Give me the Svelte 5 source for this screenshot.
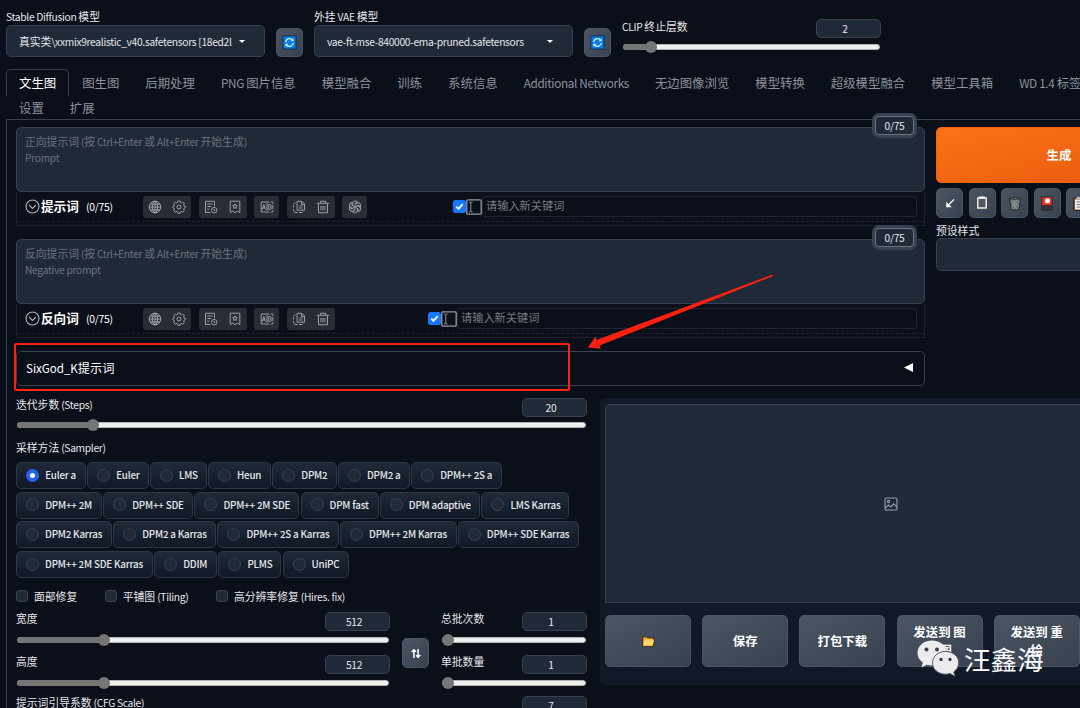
<script lang="ts">
    type Sampler = { name: string; width: number }

    const tabs: string[] = ['文生图', '图生图', '后期处理', 'PNG 图片信息', '模型融合', '训练', '系统信息', 'Additional Networks', '无边图像浏览', '模型转换', '超级模型融合', '模型工具箱', 'WD 1.4 标签器']
    const moreTabs: string[] = ['设置', '扩展']

    const samplerRows: Sampler[][] = [
        [
            { name: 'Euler a', width: 70 },
            { name: 'Euler', width: 61.5 },
            { name: 'LMS', width: 57 },
            { name: 'Heun', width: 63 },
            { name: 'DPM2', width: 64.5 },
            { name: 'DPM2 a', width: 72 },
            { name: 'DPM++ 2S a', width: 91 }
        ],
        [
            { name: 'DPM++ 2M', width: 86 },
            { name: 'DPM++ SDE', width: 90 },
            { name: 'DPM++ 2M SDE', width: 105 },
            { name: 'DPM fast', width: 78 },
            { name: 'DPM adaptive', width: 100.5 },
            { name: 'LMS Karras', width: 88 }
        ],
        [
            { name: 'DPM2 Karras', width: 96 },
            { name: 'DPM2 a Karras', width: 103 },
            { name: 'DPM++ 2S a Karras', width: 121.5 },
            { name: 'DPM++ 2M Karras', width: 116.5 },
            { name: 'DPM++ SDE Karras', width: 121 }
        ],
        [
            { name: 'DPM++ 2M SDE Karras', width: 137 },
            { name: 'DDIM', width: 63 },
            { name: 'PLMS', width: 63 },
            { name: 'UniPC', width: 66 }
        ]
    ]

    const prompts = [
        { hint: '正向提示词', sub: 'Prompt', title: '提示词', groups: [['globe', 'gear'], ['history', 'bookmark'], ['translate'], ['copy', 'trash'], ['gpt']] },
        { hint: '反向提示词', sub: 'Negative prompt', title: '反向词', groups: [['globe', 'gear'], ['history', 'bookmark'], ['translate'], ['copy', 'trash']] }
    ]

    let sampler = $state('Euler a')

    // latin runs are set a bit tighter than the chinese ones
    function runs(text: string): string[] {
        return text.split(/([\x20-\x7e]+)/)
    }
</script>

{#snippet mixed(text: string)}{#each runs(text) as run, i}{#if i % 2}<span class="latin">{run}</span>{:else}{run}{/if}{/each}{/snippet}

{#snippet slider(label: string, value: string, fill: number)}
    <div class="slider">
        <div class="slider-head">
            <span>{@render mixed(label)}</span>
            <div class="number">{@render mixed(value)}</div>
        </div>
        <div class="track">
            <div class="fill" style="width: {fill}px"></div>
            <div class="thumb"></div>
        </div>
    </div>
{/snippet}

{#snippet refresh()}
    <button class="tool refresh" aria-label="refresh">
        <svg width="15" height="15" viewBox="0 0 15 15">
            <rect x=".5" y=".5" width="14" height="14" rx="1" fill="#0a2a4c" />
            <rect x="1.4" y="1.4" width="12.2" height="12.2" fill="#0a7de0" />
            <path d="M3.7 7A3.9 3.9 0 0 1 10.7 5.2M11.3 8A3.9 3.9 0 0 1 4.3 9.8" fill="none" stroke="#d9f1ff" stroke-width="1.3" />
            <path d="M11.6 3.3v3H8.7zM3.4 11.7v-3h2.9z" fill="#d9f1ff" />
        </svg>
    </button>
{/snippet}

{#snippet icon(name: string)}
    <svg class="icon" width="14" height="14" viewBox="0 0 14 14">
        {#if name === 'globe'}
            <circle cx="7" cy="7" r="5.8" />
            <ellipse cx="7" cy="7" rx="2.7" ry="5.8" />
            <path d="M7 1.2v11.6M1.2 7h11.6M2 4.2h10M2 9.8h10" />
        {:else if name === 'gear'}
            <circle cx="7" cy="7" r="2" />
            <path d="M5.9 1h2.2l.4 1.4 1 .4 1.3-.7 1.5 1.5-.7 1.3.4 1 1.2.4v1.6l-1.2.5-.4 1 .7 1.2-1.5 1.6-1.3-.7-1 .4-.4 1.3H5.9l-.4-1.3-1-.4-1.3.7-1.5-1.6.7-1.2-.4-1L.9 7.9V6.3L2 5.9l.4-1-.7-1.3 1.5-1.5 1.3.7 1-.4z" />
        {:else if name === 'history'}
            <path d="M6.5 12.5H1.5V1.3h9v5M3.3 4h5.3M3.3 6.5h3.8M3.3 9h2" />
            <circle cx="10.2" cy="10.2" r="2.8" />
            <path d="M10 8.8v1.7h1.3" />
        {:else if name === 'bookmark'}
            <path d="M2.2 1.2h9.6v11.5L9.4 11 7 12.6 4.6 11l-2.4 1.7z" />
            <path d="M7 3.8l.7 1.5 1.7.2-1.2 1.2.3 1.7L7 7.6l-1.5.8.3-1.7-1.2-1.2 1.7-.2z" />
        {:else if name === 'translate'}
            <path d="M6 2H1.2v10H6M8 2h1.5M10.8 2h2v1.8M12.8 5v4M12.8 10.2V12h-2M9.5 12H8M7 .8v12.4" />
            <path d="M2.3 9.5L3.9 4.5l1.6 5M2.8 7.9h2.2M8.6 4.6v4.8h1.5q1.3 0 1.3-1.3 0-1.1-1.2-1.2 1-.1 1-1.1 0-1.2-1.2-1.2z" />
        {:else if name === 'copy'}
            <path d="M5 1.3h4.8L12.5 4v6.2H5zM9.5 1.3v3h3M6.8 6h3.9M6.8 8h3.9" />
            <path d="M3.5 3L1.6 4.2M1.5 5.5v2M1.5 9v1.5l1.5 2h2.5M7 12.5h3l1-1" />
        {:else if name === 'trash'}
            <path d="M.9 3.3h12.2M4.5 3V1.3h5V3M2.5 3.5v9.2h9V3.500M5 5.7v4.8M7 5.7v4.8M9 5.7v4.8" />
        {:else if name === 'gpt'}
            {#each [0, 60, 120, 180, 240, 300] as angle}
                <path transform="rotate({angle} 7 7)" d="M4.6 5.6V3.5Q4.7 1 7.2 1q1.4 0 2.3 1.1L7 3.6v3" />
            {/each}
        {/if}
    </svg>
{/snippet}

<div class="page">
    <header>
        <div class="model">
            <label for="sd">{@render mixed('Stable Diffusion 模型')}</label>
            <div class="select" id="sd">
                <span class="value">{@render mixed('真实类\\xxmix9realistic_v40.safetensors [18ed2l')}</span>
                <i class="caret"></i>
            </div>
        </div>
        {@render refresh()}
        <div class="model">
            <label for="vae">{@render mixed('外挂 VAE 模型')}</label>
            <div class="select" id="vae">
                <span class="value">{@render mixed('vae-ft-mse-840000-ema-pruned.safetensors')}</span>
                <i class="caret"></i>
            </div>
        </div>
        {@render refresh()}
        <div class="clip">
            {@render slider('CLIP 终止层数', '2', 28)}
        </div>
    </header>

    <nav>
        {#each tabs as tab, i}
            <button class="tab" class:active={i === 0}>{@render mixed(tab)}</button>
        {/each}
    </nav>
    <nav class="second">
        {#each moreTabs as tab}
            <button class="tab">{tab}</button>
        {/each}
    </nav>

    <main>
        <div class="top">
            <div class="prompts">
                {#each prompts as prompt, i}
                    <section class="prompt">
                        <div class="textarea">
                            <p>{@render mixed(prompt.hint + ' (按 Ctrl+Enter 或 Alt+Enter 开始生成)')}</p>
                            <p>{@render mixed(prompt.sub)}</p>
                            <div class="counter">{@render mixed('0/75')}</div>
                        </div>
                        <div class="keywords">
                            <div class="bar">
                                <svg class="chevron" width="15" height="15" viewBox="0 0 15 15">
                                    <circle cx="7.5" cy="7.5" r="6.5" />
                                    <path d="M4 6l3.5 3.5L11 6" />
                                </svg>
                                <b>{prompt.title}</b>
                                <span class="count">{@render mixed('(0/75)')}</span>
                                <div class="groups">
                                    {#each prompt.groups as group}
                                        <div class="group" class:single={group.length === 1}>
                                            {#each group as name}
                                                {@render icon(name)}
                                            {/each}
                                        </div>
                                    {/each}
                                </div>
                                <div class="append" class:wide={i === 1}>
                                    <svg width="13" height="13" viewBox="0 0 13 13">
                                        <rect width="13" height="13" rx="2.5" fill="#1677ff" />
                                        <path d="M3.3 6.7l2.2 2.2 4.2-4.7" fill="none" stroke="#fff" stroke-width="1.8" />
                                    </svg>
                                    <svg width="16" height="16" viewBox="0 0 16 16" fill="none" stroke="#96989c">
                                        <rect x=".8" y=".8" width="14.4" height="14.4" rx="1" stroke-width="1.3" />
                                        <path d="M3 3h1l.8.7L5.6 3h1M3 13h1l.8-.7.8.7h1M4.8 3.5v9" />
                                    </svg>
                                    <div class="keyword">请输入新关键词</div>
                                </div>
                            </div>
                        </div>
                    </section>
                {/each}
                <div class="accordion">
                    <span>{@render mixed('SixGod_K提示词')}</span>
                    <svg width="9" height="9" viewBox="0 0 9 9"><path d="M0 4.5L9 0v9z" fill="#fff" /></svg>
                    <div class="highlight"></div>
                    <svg class="arrow" width="188" height="76" viewBox="0 0 188 76">
                        <path d="M0 73.5L7.5 62.5l1 3.5L184.500.5l.5 1.500L11.500 71.500l1 3.300z" fill="#ff200f" />
                    </svg>
                </div>
            </div>

            <aside>
                <button class="generate">生成</button>
                <div class="tools">
                    <button class="tool" aria-label="read parameters">
                        <svg width="10" height="10" viewBox="0 0 12 12"><path d="M10.8 1.7L3.5 9" fill="none" stroke="#fff" stroke-width="1.5" /><path d="M1.5 4.500v6.500h6.500z" fill="#fff" /></svg>
                    </button>
                    <button class="tool" aria-label="clear">
                        <svg width="12" height="14" viewBox="0 0 12 14"><path d="M1.8 2h8.4v10H1.8z" fill="#505864" stroke="#f4e8dc" stroke-width="1.5" /><path d="M3 1.5h6" stroke="#fff" stroke-width="2" /></svg>
                    </button>
                    <button class="tool" aria-label="delete">
                        <svg width="14" height="15" viewBox="0 0 14 15"><path d="M1.5 2.5h11L11 14H3z" fill="#66716f" stroke="#22282b" /><path d="M1 2.5Q7 0 13 2.5 7 4 1 2.5z" fill="#8e9998" stroke="#22282b" /><path d="M3 5l6 8M5 4l5.5 7M9 4l-5 7M11 5l-6 8" stroke="#a4afad" stroke-width=".6" /></svg>
                    </button>
                    <button class="tool" aria-label="extra networks">
                        <svg width="12" height="15" viewBox="0 0 12 15"><rect x=".5" y=".5" width="11" height="14" rx="1" fill="#252023" /><path d="M1.3 1.3h9.4v8H1.3z" fill="#f4371d" /><circle cx="6.5" cy="4.8" r="2.5" fill="#fff" /><path d="M1.3 10Q6 7 10.7 10v3.5H1.3z" fill="#38343a" /></svg>
                    </button>
                    <button class="tool" aria-label="apply style">
                        <svg width="13" height="15" viewBox="0 0 13 15"><rect x=".7" y="1.5" width="11.5" height="13" rx="1" fill="#8b5a36" stroke="#2a2422" /><path d="M2 3.5h9v10H2z" fill="#eee" /><path d="M3.5 1h6v2.5h-6z" fill="#b4bbc2" /><path d="M3.5 6h6M3.5 8.5h6M3.5 11h6" stroke="#777" /></svg>
                    </button>
                </div>
                <span class="style-label">预设样式</span>
                <div class="styles"></div>
            </aside>
        </div>

        <div class="bottom">
            <div class="settings">
                <div class="steps">
                    {@render slider('迭代步数 (Steps)', '20', 76)}
                </div>
                <span class="sampler-label">{@render mixed('采样方法 (Sampler)')}</span>
                <div class="samplers">
                    {#each samplerRows as row}
                        <div class="row">
                            {#each row as item}
                                <button class="radio" style="width: {item.width}px" onclick={() => (sampler = item.name)}>
                                    <i class:checked={sampler === item.name}></i>
                                    <span>{item.name}</span>
                                </button>
                            {/each}
                        </div>
                    {/each}
                </div>
                <div class="checks">
                    <div class="check"><i></i><span>面部修复</span></div>
                    <div class="check"><i></i><span>{@render mixed('平铺图 (Tiling)')}</span></div>
                    <div class="check"><i></i><span>{@render mixed('高分辨率修复 (Hires. fix)')}</span></div>
                </div>
                <div class="sizes">
                    <div class="dims">
                        {@render slider('宽度', '512', 87)}
                        {@render slider('高度', '512', 87)}
                    </div>
                    <button class="tool swap" aria-label="swap">
                        <svg width="10" height="11" viewBox="0 0 12 12" fill="none" stroke="#fff" stroke-width="1.8"><path d="M3.5 11.5v-10M.8 4.3l2.7-2.8L6 4M8.5.5v10M6 8l2.5 2.5 2.7-2.8" /></svg>
                    </button>
                    <div class="batch">
                        {@render slider('总批次数', '1', 5.5)}
                        {@render slider('单批数量', '1', 5.5)}
                    </div>
                </div>
                {@render slider('提示词引导系数 (CFG Scale)', '7', 120)}
            </div>

            <div class="results">
                <div class="gallery">
                    <svg width="14" height="14" viewBox="0 0 14 14" fill="none" stroke="#9aa1ad" stroke-width="1.1">
                        <rect x="1" y="1" width="12" height="12" rx="1.2" />
                        <circle cx="4.5" cy="4.5" r="1.1" />
                        <path d="M1.3 11l3.2-3 2.2 2 3-3.2 3.3 3.4" />
                    </svg>
                </div>
                <div class="actions">
                    <button aria-label="open folder">
                        <svg width="13" height="11" viewBox="0 0 13 11"><path d="M.7 10.3V.8h4l1 1h5.6v1.5h1.2l-1.3 7z" fill="#f3a52a" stroke="#3a2a16" /><path d="M2.5 3.6h9.4l-1.2 6.1H1.3z" fill="#ffd36b" /></svg>
                    </button>
                    <button>保存</button>
                    <button>打包下载</button>
                    <button>发送到 图生图</button>
                    <button>发送到 重绘</button>
                </div>
            </div>
        </div>
    </main>

    <div class="watermark">
        <svg width="43" height="37" viewBox="0 0 43 37">
            <path d="M15 .5C6.5.5.5 6 .5 13c0 4 2 7.2 5.3 9.5L4.5 27.5l5-2.8c2 .6 3.7.8 5.5.8 8 0 14.5-5.3 14.5-12.5S23 .5 15 .5z" fill="#ececee" />
            <path d="M28.5 11.5c-7.5 0-13 5-13 11.3s5.500 11.400 13 11.400c1.500 0 3-.2 4.500-.7l5 2.800-1.300-4.300c3-2.200 5-5.400 5-9.200 0-6.300-5.700-11.300-13.200-11.300z" fill="#ececee" stroke="#555b66" />
            <circle cx="9.5" cy="9.5" r="2" fill="#38404c" />
            <circle cx="20" cy="9.5" r="2" fill="#38404c" />
            <circle cx="24" cy="19.5" r="1.7" fill="#38404c" />
            <circle cx="33" cy="19.5" r="1.7" fill="#38404c" />
        </svg>
        <span>汪鑫海</span>
    </div>
</div>

<style>
    :global(body) {
        background: #0b0f19;
    }
    .page {
        position: relative;
        width: 1080px;
        height: 708px;
        overflow: hidden;
        background: #0b0f19;
        color: #e5e7eb;
        font: 10.8px/16px "Noto Sans CJK SC", sans-serif;
    }
    .page * {
        box-sizing: border-box;
    }
    .latin {
        font-size: .95em;
        letter-spacing: -.03em;
        line-height: 1;
        white-space: pre-wrap;
    }
    button {
        margin: 0;
        padding: 0;
        border: 0;
        background: none;
        color: inherit;
        font: inherit;
    }
    svg {
        display: block;
        flex: none;
    }
    p {
        margin: 0;
    }
    header {
        display: flex;
        align-items: flex-start;
        height: 69px;
        padding: 8px 0 0 6px;
    }
    .model {
        width: 259px;
    }
    .model label {
        display: block;
        height: 17px;
    }
    .select {
        display: flex;
        align-items: center;
        justify-content: space-between;
        height: 32px;
        padding: 0 19px 0 12px;
        border: 1px solid #374151;
        border-radius: 5px;
        background: #1f2937;
        white-space: nowrap;
    }
    .value {
        margin-right: 6px;
        overflow: hidden;
    }
    .value .latin, .tab .latin {
        white-space: pre;
    }
    .caret {
        flex: none;
        border: 3px solid transparent;
        border-top-color: #fff;
        border-bottom: 0;
    }
    .tool {
        display: flex;
        flex: none;
        align-items: center;
        justify-content: center;
        width: 27px;
        height: 30px;
        border: 1px solid #4b5563;
        border-radius: 5px;
        background: linear-gradient(to bottom right, #4b5563, #374151);
    }
    .refresh {
        height: 29px;
        margin: 20px 11px 0;
    }
    .clip {
        width: 259px;
        margin-top: 11px;
    }
    .slider {
        height: 43px;
    }
    .slider-head {
        display: flex;
        justify-content: space-between;
        height: 19px;
        line-height: 14px;
    }
    .number {
        width: 65px;
        height: 19px;
        padding-right: 7px;
        border: 1px solid #374151;
        border-radius: 5px;
        background: #1f2937;
        line-height: 17px;
        text-align: center;
    }
    .track {
        display: flex;
        align-items: center;
        height: 6px;
        margin: 6px 1px 0;
        border: 1px solid #b2b2b2;
        border-radius: 3px;
        background: #efefef;
    }
    .fill {
        height: 6px;
        margin-left: -1px;
        border-radius: 3px;
        background: #757575;
    }
    .thumb {
        flex: none;
        width: 12px;
        height: 12px;
        margin-left: -6px;
        border-radius: 50%;
        background: #757575;
    }
    nav {
        display: flex;
        height: 27px;
        padding-left: 6px;
        font-size: 12.4px;
    }
    .tab {
        flex: none;
        height: 27px;
        padding: 0 12px;
        border: 1px solid transparent;
        border-bottom: 0;
        border-radius: 5px 5px 0 0;
        color: #8b919d;
        white-space: nowrap;
    }
    .tab.active {
        border-color: #374151;
        color: #fff;
    }
    .second {
        height: 23px;
    }
    .second .tab {
        height: 23px;
    }
    main {
        width: 1186px;
        height: 600px;
        margin-left: 6px;
        padding: 7px 9px 0;
        border: 1px solid #374151;
    }
    .top {
        display: flex;
        gap: 11px;
        height: 271px;
    }
    .prompts {
        flex: none;
        width: 909px;
    }
    .prompt {
        height: 112px;
    }
    .textarea {
        position: relative;
        height: 65px;
        padding: 6px 8px;
        border: 1px solid #374151;
        border-radius: 5px;
        background: #1f2937;
        color: #6b7280;
        line-height: 15.5px;
    }
    .counter {
        position: absolute;
        top: -12px;
        right: 10px;
        width: 39px;
        height: 19px;
        border: 1.5px solid #6b7280;
        border-radius: 4px;
        background: #1f2937;
        box-shadow: 0 0 0 3px #374151;
        color: #e5e7eb;
        line-height: 16px;
        text-align: center;
    }
    .keywords {
        height: 34px;
        border: 1px solid #1b202b;
        border-top: 0;
    }
    .bar {
        display: flex;
        align-items: center;
        height: 30px;
        padding: 0 7px 0 8px;
        border-bottom: 1px dashed #20242f;
    }
    .chevron {
        fill: none;
        stroke: #b4b6ba;
        stroke-width: 1.1;
    }
    .bar b {
        flex: none;
        width: 38px;
        margin-left: 1px;
        padding-bottom: 1px;
        color: #fff;
        font-size: 12.6px;
    }
    .count {
        flex: none;
        width: 64px;
        padding: 0 0 2px 7px;
        color: #fff;
        font-size: 11px;
    }
    .groups {
        display: flex;
        gap: 7.6px;
    }
    .group {
        display: flex;
        flex: none;
        align-items: center;
        justify-content: space-around;
        width: 48px;
        height: 22px;
        border-radius: 3px;
        background: #292b35;
    }
    .group.single {
        width: 25px;
    }
    .icon {
        fill: none;
        stroke: #a9abb0;
        stroke-width: .9;
    }
    .append {
        display: flex;
        flex: none;
        align-items: center;
        width: 464px;
        margin-left: auto;
    }
    .append.wide {
        width: 489px;
    }
    .keyword {
        flex: 1;
        height: 21px;
        padding-left: 3px;
        border: 1px solid #20242f;
        border-radius: 3px;
        color: #777a80;
        font-size: 11.2px;
        line-height: 17px;
    }
    .accordion {
        position: relative;
        display: flex;
        align-items: center;
        justify-content: space-between;
        height: 35px;
        padding: 0 11px 2px 9px;
        border: 1px solid #374151;
        border-radius: 5px;
        color: #fff;
        font-size: 12.2px;
    }
    .accordion .latin {
        letter-spacing: 0;
    }
    .highlight {
        position: absolute;
        top: -9px;
        left: -3px;
        width: 556px;
        height: 48px;
        border: 2px solid #ff200f;
        border-radius: 2px;
    }
    .arrow {
        position: absolute;
        top: -78px;
        left: 571px;
    }
    aside {
        width: 246px;
        flex: none;
    }
    .generate {
        width: 246px;
        height: 56px;
        border: 1px solid #f0640f;
        border-radius: 5px;
        background: linear-gradient(to bottom right, #f97316, #ea580c);
        color: #fff;
        font-size: 12.4px;
        font-weight: bold;
    }
    .tools {
        display: flex;
        gap: 5.5px;
        margin: 5px 0 4px;
    }
    .style-label {
        display: block;
        height: 16px;
    }
    .styles {
        height: 33px;
        border: 1px solid #374151;
        border-radius: 5px;
        background: #1f2937;
    }
    .bottom {
        display: flex;
    }
    .settings {
        width: 571px;
        flex: none;
    }
    .settings .slider-head {
        line-height: 13px;
    }
    .settings .number {
        line-height: 17px;
    }
    .steps {
        height: 42px;
    }
    .steps .track {
        margin-top: 5px;
    }
    .sampler-label {
        display: block;
        height: 22px;
        line-height: 15px;
    }
    .samplers {
        display: grid;
        gap: 2.7px;
    }
    .row {
        display: flex;
        gap: 1.2px;
    }
    .radio {
        display: flex;
        flex: none;
        align-items: center;
        gap: 6px;
        height: 27px;
        padding: 0 0 1px 9px;
        border: 1px solid #2d3746;
        border-radius: 5px;
        background: linear-gradient(#1f2937, #111827);
        font-size: 9.8px;
        font-weight: 500;
        letter-spacing: -.2px;
        white-space: nowrap;
    }
    .radio span {
        flex: 1;
        padding-right: 9px;
        text-align: right;
    }
    .radio i {
        flex: none;
        width: 13px;
        height: 13px;
        border: 1px solid #374151;
        border-radius: 50%;
        background: #1f2937;
    }
    .radio i.checked {
        border: 4px solid #2563eb;
        background: #fff;
    }
    .checks {
        display: flex;
        gap: 27.6px;
        height: 34px;
        padding-top: 10px;
    }
    .check {
        display: flex;
        gap: 6px;
        height: 16px;
        align-items: center;
    }
    .check i {
        width: 12px;
        height: 12px;
        border: 1px solid #374151;
        border-radius: 3px;
        background: #1f2937;
    }
    .sizes {
        display: flex;
        height: 84px;
    }
    .dims {
        width: 374px;
    }
    .swap {
        margin: 26px 12px 0;
    }
    .batch {
        width: 146px;
    }
    .results {
        flex: none;
        width: 580px;
        height: 287px;
        margin-left: 13px;
        padding: 6px 5px;
        border-radius: 5px;
        background: #111827;
    }
    .gallery {
        display: flex;
        align-items: center;
        justify-content: center;
        width: 571px;
        height: 199px;
        border: 1px solid #374151;
        border-radius: 5px 5px 0 0;
        background: #1f2937;
    }
    .actions {
        display: flex;
        gap: 11.2px;
        margin-top: 12px;
    }
    .actions button {
        display: flex;
        flex: none;
        align-items: center;
        justify-content: center;
        width: 86px;
        height: 52px;
        padding: 0 14px;
        border: 1px solid #4b5563;
        border-radius: 5px;
        background: linear-gradient(to bottom right, #4b5563, #374151);
        color: #fff;
        font-size: 12.4px;
        font-weight: bold;
        line-height: 18px;
        text-align: center;
    }
    .watermark {
        position: absolute;
        top: 640px;
        left: 917px;
        display: flex;
        gap: 4px;
        color: #fff;
        font-size: 26.5px;
        line-height: 37px;
    }
</style>
